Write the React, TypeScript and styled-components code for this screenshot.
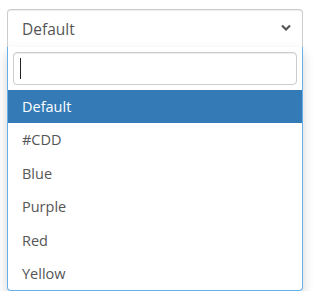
import React, { FunctionComponent } from 'react';
import styled, { createGlobalStyle } from 'styled-components';

const GlobalStyle = createGlobalStyle`
  body {
    margin: 0;
    background: #fff;
    font-family: 'Open Sans', 'Liberation Sans', sans-serif;
  }
`;

const Page = styled.div`
  padding: 9px 0 0 7px;
`;

const Container = styled.div`
  width: 296px;
  line-height: 1.42857;
  color: #555;
`;

const Selection = styled.div`
  box-sizing: border-box;
  height: 38px;
  display: flex;
  align-items: center;
  justify-content: space-between;
  padding: 2px 11px 0 14px;
  font-size: 15.5px;
  border: 1px solid #ccc;
  border-bottom: none;
  border-radius: 4px 4px 0 0;
  background: #fff;
  box-shadow: inset 0 1px 1px rgba(0, 0, 0, 0.075);
`;

const Arrow = styled.svg`
  width: 10px;
  height: 7px;
  margin-top: -5px;
`;

const Dropdown = styled.div`
  box-sizing: border-box;
  border: 1px solid #66afe9;
  border-top: none;
  border-radius: 0 0 4px 4px;
  background: #fff;
  box-shadow: 0 6px 12px rgba(0, 0, 0, 0.175);
  overflow: hidden;
`;

const SearchWrap = styled.div`
  padding: 5px 5px;
`;

const SearchField = styled.div`
  box-sizing: border-box;
  height: 33px;
  display: flex;
  align-items: center;
  padding: 0 6px;
  border: 1px solid #ccc;
  border-radius: 4px;
  box-shadow: inset 0 1px 1px rgba(0, 0, 0, 0.075);
`;

const Caret = styled.span`
  width: 1px;
  height: 21px;
  background: #222;
`;

const Results = styled.ul`
  list-style: none;
  margin: 0;
  padding: 0;
`;

const Option = styled.li<{ $active?: boolean }>`
  padding: 6px 14px;
  font-size: 14.5px;
  line-height: 21.4px;
  color: ${(p) => (p.$active ? '#fff' : '#555')};
  background: ${(p) => (p.$active ? '#337ab7' : 'transparent')};
`;

const options = ['Default', '#CDD', 'Blue', 'Purple', 'Red', 'Yellow'];

const App: FunctionComponent = () => {
  return (
    <>
      <GlobalStyle />
      <Page>
        <Container>
          <Selection>
            <span>Default</span>
            <Arrow viewBox="0 0 10 7">
              <path d="M1 1.5 L5 5.5 L9 1.5" fill="none" stroke="#555" strokeWidth="2.2" />
            </Arrow>
          </Selection>
          <Dropdown>
            <SearchWrap>
              <SearchField>
                <Caret />
              </SearchField>
            </SearchWrap>
            <Results>
              {options.map((o, i) => (
                <Option key={o} $active={i === 0}>
                  {o}
                </Option>
              ))}
            </Results>
          </Dropdown>
        </Container>
      </Page>
    </>
  );
};

export default App;
